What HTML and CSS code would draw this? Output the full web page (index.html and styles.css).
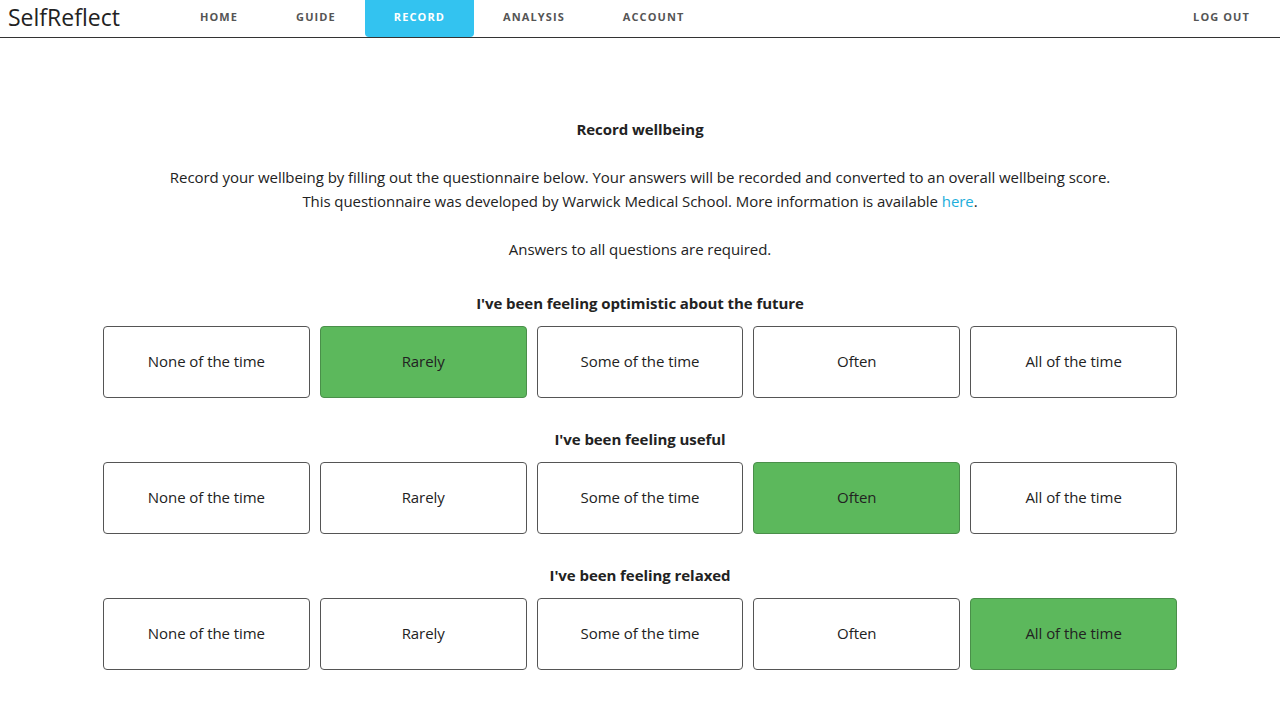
FILE: index.html
```html
<!DOCTYPE html>
<html lang="en">
<head>
<meta charset="utf-8">
<title>SelfReflect - Record</title>
<link rel="stylesheet" href="styles.css">
</head>
<body>
<header class="nav">
  <a class="logo" href="#">SelfReflect</a>
  <nav class="links">
    <a class="link" href="#">Home</a>
    <a class="link" href="#">Guide</a>
    <a class="link active" href="#">Record</a>
    <a class="link" href="#">Analysis</a>
    <a class="link" href="#">Account</a>
  </nav>
  <a class="link logout" href="#">Log out</a>
</header>
<main class="main">
  <h1 class="title">Record wellbeing</h1>
  <p class="intro">Record your wellbeing by filling out the questionnaire below. Your answers will be recorded and converted to an overall wellbeing score.<br>This questionnaire was developed by Warwick Medical School. More information is available <a href="#" class="here">here</a>.</p>
  <p class="required">Answers to all questions are required.</p>

  <section class="question">
    <h2 class="q-title">I've been feeling optimistic about the future</h2>
    <div class="options">
      <div class="opt">None of the time</div>
      <div class="opt selected">Rarely</div>
      <div class="opt">Some of the time</div>
      <div class="opt">Often</div>
      <div class="opt">All of the time</div>
    </div>
  </section>

  <section class="question">
    <h2 class="q-title">I've been feeling useful</h2>
    <div class="options">
      <div class="opt">None of the time</div>
      <div class="opt">Rarely</div>
      <div class="opt">Some of the time</div>
      <div class="opt selected">Often</div>
      <div class="opt">All of the time</div>
    </div>
  </section>

  <section class="question">
    <h2 class="q-title">I've been feeling relaxed</h2>
    <div class="options">
      <div class="opt">None of the time</div>
      <div class="opt">Rarely</div>
      <div class="opt">Some of the time</div>
      <div class="opt">Often</div>
      <div class="opt selected">All of the time</div>
    </div>
  </section>
</main>
</body>
</html>
```

FILE: styles.css
```css
html, body {
  margin: 0;
  padding: 0;
  background: #fff;
}
body {
  font-family: "Open Sans", "Liberation Sans", sans-serif;
  font-size: 15px;
  line-height: 24px;
  letter-spacing: -0.06px;
  color: #222;
}
a { text-decoration: none; }

.nav {
  display: flex;
  align-items: stretch;
  height: 37px;
  border-bottom: 1px solid #333;
}
.logo {
  width: 171px;
  padding-left: 8px;
  box-sizing: border-box;
  font-size: 23px;
  line-height: 34px;
  color: #222;
  letter-spacing: 0;
}
.links {
  display: flex;
  flex: 1;
}
.link {
  display: flex;
  align-items: center;
  padding: 0 29px 3px;
  font-size: 11px;
  font-weight: 700;
  letter-spacing: 1.1px;
  text-transform: uppercase;
  color: #555;
  height: 37px;
  box-sizing: border-box;
}
.link.active {
  background: #33c3f0;
  color: #fff;
  border-radius: 0 0 4px 4px;
}
.logout {
  padding-right: 30px;
}

.main {
  padding-top: 79px;
  text-align: center;
}
.title {
  margin: 0 0 24px;
  font-size: 15px;
  font-weight: 700;
  line-height: 24px;
}
.intro {
  margin: 0 0 24px;
}
.here { color: #1eaedb; }
.required {
  margin: 0 0 30px;
}
.question {
  width: 1074px;
  margin: 0 auto 29px;
}
.q-title {
  margin: 0 0 11px;
  font-size: 15px;
  font-weight: 700;
  line-height: 24px;
}
.options {
  display: grid;
  grid-template-columns: repeat(5, 1fr);
  gap: 10px;
}
.opt {
  height: 72px;
  box-sizing: border-box;
  display: flex;
  align-items: center;
  justify-content: center;
  padding-bottom: 2px;
  border: 1px solid #555;
  border-radius: 4px;
  background: #fff;
  color: #222;
}
.opt.selected {
  background: #5cb85c;
  border-color: #4a8f4a;
}
```
